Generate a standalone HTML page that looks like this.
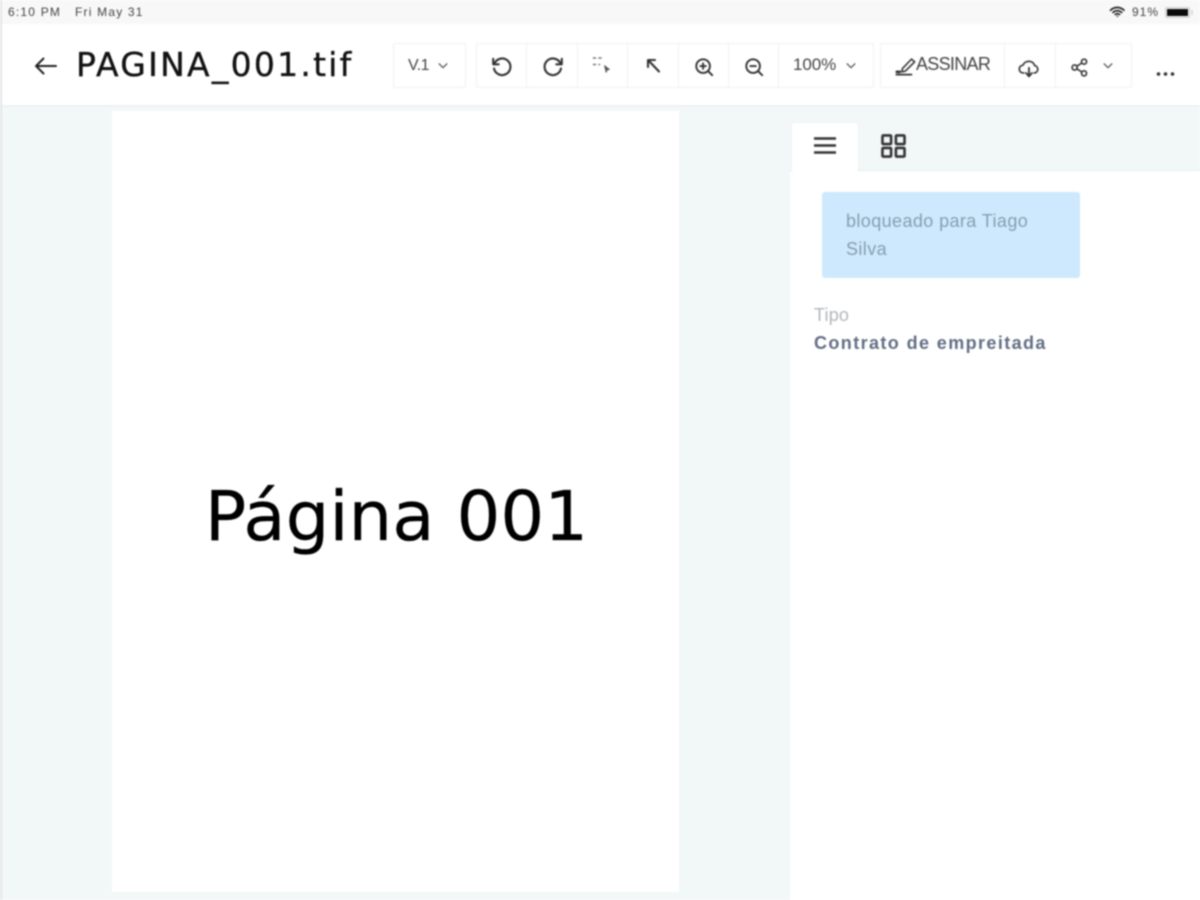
<!DOCTYPE html>
<html lang="pt"><head><meta charset="utf-8"><title>PAGINA_001.tif</title>
<style>
*{box-sizing:border-box}
html,body{margin:0;padding:0;background:#fff}
body{width:1200px;height:900px;overflow:hidden;position:relative;font-family:"Liberation Sans",sans-serif}
#w{position:absolute;inset:0;filter:blur(.7px)}
.a{position:absolute;white-space:nowrap}
.box{position:absolute;background:#fff;border:1px solid #eef0f1;border-radius:2px;top:43px;height:45px}
.d{position:absolute;top:43px;width:1px;height:45px;background:#eef0f1}
.st{font-size:12px;color:#444;line-height:16px;letter-spacing:1.2px;top:4px}
svg{position:absolute;overflow:visible;fill:none;stroke:#333;stroke-width:1.7;stroke-linecap:round;stroke-linejoin:round}
</style></head><body><div id="w">
<div class="a" style="left:0;top:0;width:1200px;height:24px;background:#f8f8f8"></div>
<div class="a st" style="left:8px">6:10 PM</div>
<div class="a st" style="left:75px">Fri May 31</div>
<svg style="left:1109px;top:6px" width="17" height="12" viewBox="0 0 17 12"><path d="M1.500 4.200C5.500.6 11 .6 15 4.200M4 6.500c2.700-2.300 6-2.300 8.700 0M6.300 8.500c1.300-1 2.900-1 4.200 0" stroke-width="1.700" stroke="#222"/><path d="M8.400 11.300l-1.300-1.400h2.600z" fill="#222" stroke="none"/></svg>
<div class="a st" style="left:1132px;letter-spacing:1px">91%</div>
<div class="a" style="left:1165px;top:7px;width:25px;height:11px;border:1px solid #ccc;border-radius:2px;padding:1px"><div style="width:21px;height:7px;background:#0a0a0a"></div></div>
<div class="a" style="left:1191px;top:10px;width:2px;height:5px;background:#ddd"></div>

<div class="a" style="left:0;top:24px;width:1200px;height:82px;background:#fff"></div>
<div class="a" style="left:0;top:105px;width:1200px;height:2px;background:#eef1f2"></div>
<div class="a" style="left:0;top:107px;width:790px;height:793px;background:#f2f7f8"></div>
<div class="a" style="left:0;top:0;width:2px;height:900px;background:#e4e6e6"></div>
<div class="a" style="left:112px;top:111px;width:567px;height:781px;background:#fff"></div>
<div class="a" style="left:113px;top:475px;width:567px;text-align:center;font:69px/84px 'DejaVu Sans',sans-serif;color:#000;-webkit-text-stroke:.2px #000">Página 001</div>

<svg style="left:34px;top:56px" width="24" height="20" viewBox="0 0 24 20"><path d="M22 10H2M9.500 2.500L2 10l7.500 7.500" stroke="#222" stroke-width="2"/></svg>
<div class="a" style="left:76px;top:44px;font:33px/42px 'DejaVu Sans','Liberation Sans',sans-serif;letter-spacing:2.250px;color:#111;-webkit-text-stroke:.35px #111">PAGINA_001.tif</div>

<div class="box" style="left:393px;width:73px"></div>
<div class="a" style="left:408px;top:56px;font-size:16px;line-height:20px;color:#444;letter-spacing:-.5px">V.1</div>
<svg style="left:438px;top:63px" width="10" height="6" viewBox="0 0 11 7"><path d="M1 1l4.500 4.500L10 1" stroke="#555" stroke-width="1.500"/></svg>

<div class="box" style="left:476px;width:398px"></div>
<div class="d" style="left:526px"></div><div class="d" style="left:577px"></div><div class="d" style="left:627px"></div><div class="d" style="left:678px"></div><div class="d" style="left:728px"></div><div class="d" style="left:778px"></div>

<svg style="left:490px;top:55px" width="24" height="24" viewBox="0 0 24 24"><path d="M4.500 8.500A8.300 8.300 0 1 1 4 13.500" stroke-width="2.100"/><path d="M3.200 3.800v5.500h5.500" stroke-width="2.100"/></svg>
<svg style="left:541px;top:55px" width="24" height="24" viewBox="0 0 24 24"><path d="M19.500 8.500A8.300 8.300 0 1 0 20 13.500" stroke-width="2.100"/><path d="M20.800 3.800v5.500h-5.500" stroke-width="2.100"/></svg>
<svg style="left:592px;top:56px" width="20" height="18" viewBox="0 0 20 18"><path d="M1.500 2h2M7 2h2M1.500 8.500h2M7 8.500h.5" stroke="#777" stroke-width="1.600"/><path d="M12.500 9.500l5 4-2.500.5-.8 2.500z" fill="#555" stroke="#555" stroke-width=".8"/></svg>
<svg style="left:645px;top:57px" width="16" height="16" viewBox="0 0 16 16"><path d="M14 14.500L3.500 3.500M3 10V3h7" stroke-width="2.100"/></svg>
<svg style="left:694px;top:57px" width="20" height="20" viewBox="0 0 22 22"><circle cx="10" cy="10" r="7.500" stroke-width="2.100"/><path d="M15.500 15.500l4.500 4.500M7 10h6M10 7v6" stroke-width="2.100"/></svg>
<svg style="left:744px;top:57px" width="20" height="20" viewBox="0 0 22 22"><circle cx="10" cy="10" r="7.500" stroke-width="2.100"/><path d="M15.500 15.500l4.500 4.500M7 10h6" stroke-width="2.100"/></svg>
<div class="a" style="left:793px;top:55px;font-size:17px;line-height:20px;color:#444;letter-spacing:-.1px">100%</div>
<svg style="left:846px;top:63px" width="10" height="6" viewBox="0 0 11 7"><path d="M1 1l4.500 4.500L10 1" stroke="#555" stroke-width="1.500"/></svg>

<div class="box" style="left:880px;width:252px"></div>
<div class="d" style="left:1004px"></div><div class="d" style="left:1055px"></div>
<svg style="left:895px;top:55px" width="22" height="21" viewBox="0 0 24 23"><path d="M8 15L18 4.500l3.500 3L11.500 17.500l-4 1z" stroke-width="1.700"/><path d="M1.500 21.500H18" stroke-width="2"/><path d="M2 18.500h3" stroke-width="3"/></svg>
<div class="a" style="left:916px;top:54px;font-size:18px;line-height:20px;color:#444;letter-spacing:-.7px">ASSINAR</div>
<svg style="left:1018px;top:60px" width="22" height="19" viewBox="0 0 24 22"><path d="M6 15H5.500a4.500 4.500 0 0 1-.5-9C6 3 9 1.500 12 1.500c3.500 0 6 2.500 6.500 5a4.300 4.300 0 0 1 0 8.500H18" stroke-width="1.900"/><path d="M12 9v9M8.500 15l3.500 4 3.500-4" stroke-width="2.100"/></svg>
<svg style="left:1071px;top:58px" width="18" height="19" viewBox="0 0 20 21"><circle cx="4" cy="10.500" r="2.800" stroke-width="1.800"/><circle cx="14.500" cy="4" r="2.800" stroke-width="1.800"/><circle cx="14.500" cy="17" r="2.800" stroke-width="1.800"/><path d="M6.500 9l5.500-3.500M6.500 12l5.500 3.500" stroke-width="1.800"/></svg>
<svg style="left:1103px;top:63px" width="10" height="6" viewBox="0 0 11 7"><path d="M1 1l4.500 4.500L10 1" stroke="#555" stroke-width="1.500"/></svg>
<svg style="left:1156px;top:71px" width="20" height="6" viewBox="0 0 20 6"><circle cx="2.500" cy="3" r="1.800" fill="#333" stroke="none"/><circle cx="9.500" cy="3" r="1.800" fill="#333" stroke="none"/><circle cx="16.500" cy="3" r="1.800" fill="#333" stroke="none"/></svg>

<div class="a" style="left:790px;top:107px;width:410px;height:793px;background:#fff"></div>
<div class="a" style="left:790px;top:107px;width:410px;height:64px;background:#f2f7f8;border-bottom:1px solid #e9eeef"></div>
<div class="a" style="left:791px;top:122px;width:68px;height:50px;background:#fff;border:1px solid #eef1f2;border-bottom:0;border-radius:3px 3px 0 0"></div>
<svg style="left:812px;top:136px" width="26" height="20" viewBox="0 0 26 20"><path d="M2 2.500h22M2 9.500h22M2 16.500h22" stroke="#333" stroke-width="2.500" stroke-linecap="butt"/></svg>
<svg style="left:881px;top:134px" width="25" height="24" viewBox="0 0 26 25"><rect x="1.500" y="1.500" width="9" height="9" rx="1" stroke-width="2.700"/><rect x="15.500" y="1.500" width="9" height="9" rx="1" stroke-width="2.700"/><rect x="1.500" y="14.500" width="9" height="9" rx="1" stroke-width="2.700"/><rect x="15.500" y="14.500" width="9" height="9" rx="1" stroke-width="2.700"/></svg>

<div class="a" style="left:822px;top:192px;width:258px;height:86px;background:#cee9fd;border-radius:3px"></div>
<div class="a" style="left:846px;top:207px;font-size:18px;line-height:28px;color:#869cb0;letter-spacing:.4px">bloqueado para Tiago<br>Silva</div>
<div class="a" style="left:814px;top:304px;font-size:18px;line-height:22px;color:#b2b5b9;letter-spacing:.2px">Tipo</div>
<div class="a" style="left:814px;top:332px;font-size:18px;line-height:22px;font-weight:bold;color:#626e83;letter-spacing:1.4px">Contrato de empreitada</div>
</div></body></html>
